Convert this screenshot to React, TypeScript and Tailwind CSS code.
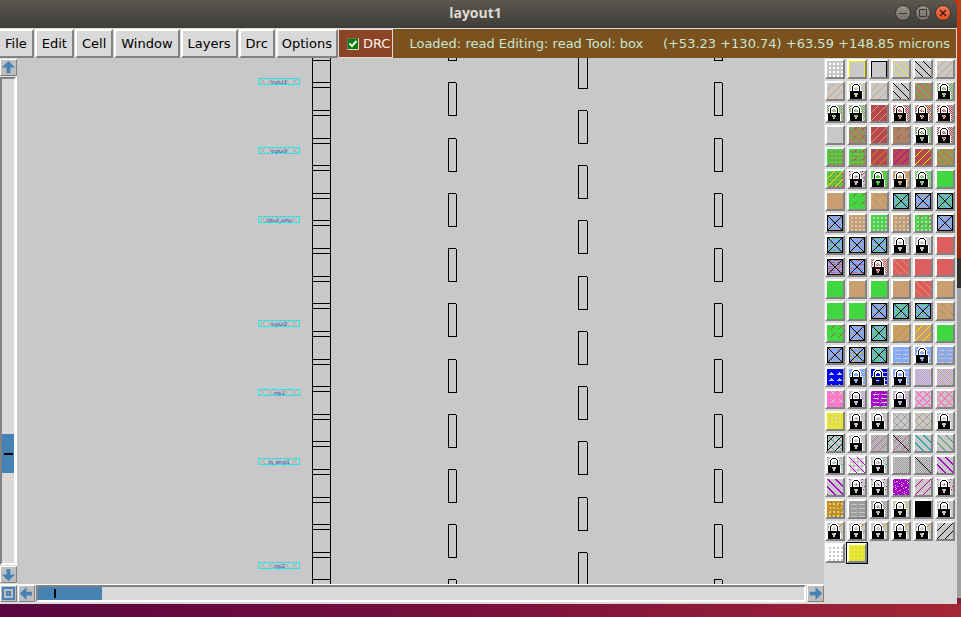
import React, { useState } from "react";

type Test = (x: number, y: number) => boolean;

const SIZE = 16;
const mod = (a: number, b: number) => ((a % b) + b) % b;

const LOCK = [
  "....WWWWWW......",
  "...WWKKKKWW.....",
  "..WWKWWWWKWW....",
  "..WKWWWWWWKW....",
  "..WKWW..WWKW....",
  "..WKW....WKW....",
  "..WKW....WKW....",
  ".WWKWWWWWWKWW...",
  ".KKKKKKKKKKKK...",
  "WKKKKKKKKKKKKW..",
  "WKKKK....KKKKW..",
  "WKKKK....KKKKW..",
  "WKKKKK..KKKKKW..",
  "WKKKKK..KKKKKW..",
  "WKKKKKKKKKKKKW..",
  "WKKKKKKKKKKKKW..",
];

const tests: Record<string, Test> = {
  fill: () => true,
  slash: (x, y) => mod(x + y, 8) === 7,
  back: (x, y) => mod(x - y, 8) === 0,
  backWide: (x, y) => mod(x - y, 8) < 2,
  slashDash: (x, y) => mod(x + y, 8) === 7 && mod(x, 8) > 3,
  backDash: (x, y) => mod(x - y, 8) === 4 && mod(x, 8) > 3,
  cross: (x, y) => mod(x + y, 8) === 7 || mod(x - y, 8) === 0,
  crossWide: (x, y) => mod(x + y, 8) > 5 || mod(x - y, 8) < 2,
  dots: (x, y) => mod(x, 4) > 1 && mod(y, 4) > 1,
  checker: (x, y) => mod(x + y, 2) === 0,
  checkerA: (x, y) => mod(x + y, 4) === 0,
  checkerB: (x, y) => mod(x + y, 4) === 2,
  dash: (x, y) => mod(y, 4) === 1 && mod(x + y, 8) < 6,
  bars: (x, y) => mod(y, 4) === 3 && mod(x + y * 2, 8) < 6,
  specks: (x, y) => (x * 7 + y * 11) % 13 === 0,
  speckle: (x, y) => (x * 5 + y * 3 + ((x * y) % 3)) % 7 === 0,
  tri: (x, y) => mod(y, 6) > 2 && Math.abs(mod(x, 8) - 4) < mod(y, 6) - 2,
  frame: (x, y) => x === 0 || y === 0 || x === 15 || y === 15,
  open: (x, y) => x === 0 || y === 0 || x === 15,
  ex: (x, y) => x === 0 || y === 0 || x === 15 || y === 15 || x === y || x + y === 15,
  diag: (x, y) => x === y,
  lockW: (x, y) => LOCK[y][x] === "W",
  lockK: (x, y) => LOCK[y][x] === "K",
};

function pixels(test: Test) {
  let d = "";
  for (let y = 0; y < SIZE; y++) {
    let x = 0;
    while (x < SIZE) {
      if (!test(x, y)) {
        x++;
        continue;
      }
      const start = x;
      while (x < SIZE && test(x, y)) x++;
      d += `M${start} ${y}h${x - start}v1h${start - x}z`;
    }
  }
  return d;
}

const paths: Record<string, string> = Object.fromEntries(
  Object.entries(tests).map(([name, test]) => [name, pixels(test)]),
);

const colours: Record<string, string> = {
  gray: "#c8c8c8",
  mid: "#9e9e9e",
  white: "#ffffff",
  black: "#000000",
  green: "#41d741",
  tan: "#c99e70",
  sand: "#d0a070",
  red: "#de5d5d",
  maroon: "#b84850",
  brown: "#a98366",
  rust: "#b05040",
  sky: "#82aaff",
  blue: "#0000ff",
  lilac: "#c4a0dc",
  pink: "#ff78cc",
  mauve: "#d084b4",
  purple: "#a800c8",
  magenta: "#c8008c",
  teal: "#28a8a0",
  yellow: "#eeee00",
  gold: "#c89600",
};

const lock = (marks = "") => `fill:gray ${marks} lockW:white lockK:black`;
const boxed = (marks: string) => `fill:sky ${marks} ex:black`;

const greenLock = lock("checkerA:green checkerB:brown");
const maroonLock = lock("checker:maroon");
const tanBox = boxed("dash:tan");
const greenBox = boxed("dash:green bars:green");
const mixedBox = boxed("dash:green specks:tan");
const goldLock = lock("slashDash:gold");

const LAYERS: string[][] = [
  ["fill:gray dots:white", "fill:gray open:yellow", "fill:gray open:black", "fill:gray back:yellow", "fill:gray back:black", "fill:gray slash:sand"],
  ["fill:gray slash:sand", lock("specks:yellow"), "fill:gray slash:sand", "fill:gray back:black", "fill:brown back:green", greenLock],
  [greenLock, greenLock, "fill:maroon slash:sand", maroonLock, lock("checker:maroon specks:yellow"), maroonLock],
  ["fill:gray", "fill:brown back:green slashDash:rust", "fill:maroon slash:sand", "fill:brown slashDash:maroon", greenLock, maroonLock],
  ["fill:green dots:red", "fill:green dots:red slashDash:maroon", "fill:maroon slash:gold", "fill:maroon slash:purple", "fill:maroon slash:yellow", "fill:brown back:green slash:gold"],
  ["fill:green dots:red slash:yellow", lock("checkerA:brown specks:purple"), lock("fill:green specks:red"), lock("fill:tan specks:gray"), lock("checker:green"), "fill:green"],
  ["fill:tan", "fill:green slashDash:rust", "fill:tan backDash:brown", greenBox, tanBox, greenBox],
  [tanBox, "fill:tan dots:gray", "fill:green dots:gray", "fill:tan dots:gray slashDash:brown", "fill:green dots:gray slashDash:rust", tanBox],
  [mixedBox, tanBox, mixedBox, lock(), lock(), "fill:red"],
  [boxed("dash:red bars:red"), boxed("dash:red"), lock("checker:red"), "fill:red back:sand", "fill:red", "fill:red"],
  ["fill:green", "fill:tan", "fill:green", "fill:tan", "fill:red back:sand", "fill:tan"],
  ["fill:green", "fill:green", tanBox, greenBox, mixedBox, "fill:tan backDash:brown"],
  ["fill:green slashDash:rust", tanBox, greenBox, "fill:tan slash:gold", "fill:tan slash:yellow", "fill:green"],
  [tanBox, boxed("dash:tan specks:yellow"), greenBox, "fill:sky bars:gray", lock("fill:sky bars:gray"), "fill:sky bars:gray back:tan"],
  ["fill:blue tri:gray", lock("fill:sky bars:gray"), lock("fill:blue bars:gray"), lock("fill:sky bars:gray"), "fill:gray checker:lilac", "fill:gray checker:lilac back:tan"],
  ["fill:pink slashDash:gray backDash:gray", lock("checker:lilac"), "fill:purple bars:gray specks:mid", lock("checker:lilac"), "fill:gray crossWide:pink", "fill:gray crossWide:pink back:tan"],
  ["fill:yellow dots:gray speckle:gray frame:yellow", lock("specks:pink"), lock("specks:pink"), "fill:gray cross:mid", "fill:gray cross:mid back:tan", lock()],
  ["fill:gray cross:teal open:black slash:black", lock(), "fill:gray cross:mauve checker:mid", "fill:gray slash:mauve checker:mid diag:black", "fill:gray backWide:teal", "fill:gray backWide:teal back:tan"],
  [lock("specks:teal"), "fill:gray frame:white dots:white back:purple", lock("specks:teal"), "fill:gray checker:mid", "fill:gray checker:mid diag:black", "fill:gray backWide:purple"],
  ["fill:gray back:tan backWide:purple", lock("specks:purple"), lock("specks:purple"), "fill:purple speckle:gray", "fill:gray slash:magenta", lock("specks:magenta")],
  ["fill:gold dots:gray specks:maroon", "fill:mid bars:gray", lock("checker:mid"), lock("specks:yellow"), "fill:black", lock()],
  [goldLock, goldLock, goldLock, goldLock, goldLock, "fill:gray slash:black"],
  ["fill:white dots:gray", "fill:yellow dots:gray"],
];

function Swatch({ marks }: { marks: string }) {
  return (
    <svg className="block size-4" viewBox="0 0 16 16" shapeRendering="crispEdges" aria-hidden="true">
      {marks
        .split(" ")
        .filter(Boolean)
        .map((mark, i) => {
          const [shape, colour] = mark.split(":");
          return <path key={i} d={paths[shape]} fill={colours[colour]} />;
        })}
    </svg>
  );
}

function Palette() {
  const [selected, setSelected] = useState(133);
  return (
    <aside className="w-[133px] shrink-0 bg-[#d9d9d9]">
      <div className="grid w-[132px] grid-cols-6">
        {LAYERS.flat().map((marks, i) => (
          <button
            key={i}
            type="button"
            aria-label={`Layer ${i + 1}`}
            aria-pressed={i === selected}
            onClick={() => setSelected(i)}
            className={i === selected ? "border border-black" : "border border-[#d9d9d9]"}
          >
            <span className="block border-2 border-t-white border-r-[#828282] border-b-[#828282] border-l-white">
              <Swatch marks={marks} />
            </span>
          </button>
        ))}
      </div>
    </aside>
  );
}

const RAILS = Array.from({ length: 20 }, (_, k) => Math.round(82.3 + 27.62 * (k - 1)));
const SLOTS = Array.from({ length: 11 }, (_, k) => Math.round(82.3 + 55.24 * (k - 1)));
const MID_SLOTS = Array.from({ length: 10 }, (_, k) => Math.round(110 + 55.24 * (k - 1)));
const PINS: [number, string][] = [
  [78, "input1"],
  [147, "input0"],
  [216, "input_amp"],
  [320, "input2"],
  [389, "mp1"],
  [458, "in_amp1"],
  [562, "mp2"],
];

function Slot({ x, y, w }: { x: number; y: number; w: number }) {
  return <path d={`M${x} ${y + 0.5}h${w - 1}M${x + w - 0.5} ${y + 1}v33M${x} ${y + 33.5}h${w}M${x + 0.5} ${y}v34`} />;
}

function Drawing() {
  return (
    <svg className="absolute inset-0 size-full" role="img" aria-label="Layout view">
      <g transform="translate(-17 -58)" shapeRendering="crispEdges" stroke="#000" fill="none">
        <path d="M312.5 0V2000M330.5 0V2000" />
        {RAILS.map((y) => (
          <path key={y} d={`M312 ${y + 0.5}h18M312 ${y + 5.5}h18`} />
        ))}
        {SLOTS.map((y) => (
          <g key={y}>
            <Slot x={448} y={y} w={9} />
            <Slot x={714} y={y} w={9} />
          </g>
        ))}
        {MID_SLOTS.map((y) => (
          <Slot key={y} x={578} y={y} w={10} />
        ))}
        {PINS.map(([y, name]) => (
          <g key={y}>
            <path
              stroke="#a8a8a8"
              d={[260, 268, 276, 284, 292].map((x) => `M${x} ${y + 1}l5 5M${x + 5} ${y + 1}l-5 5`).join("")}
            />
            <rect x="258.5" y={y + 0.5} width="41" height="6" stroke="#28e6e6" />
            <text x="279" y={y + 6} textAnchor="middle" fill="#1e46b4" stroke="none" fontSize="5" fontFamily="DejaVu Sans, sans-serif">
              {name}
            </text>
          </g>
        ))}
      </g>
    </svg>
  );
}

const ARROWS = {
  up: "M8 1L15 8H10V14H6V8H1Z",
  down: "M8 15L15 8H10V2H6V8H1Z",
  left: "M1 8L8 1V6H14V10H8V15Z",
  right: "M15 8L8 1V6H2V10H8V15Z",
};

function ArrowButton({ to, label }: { to: keyof typeof ARROWS; label: string }) {
  return (
    <button type="button" aria-label={label} className="size-[17px] shrink-0 border border-t-white border-r-[#828282] border-b-[#828282] border-l-white bg-[#bebebe]">
      <svg className="block size-full" viewBox="0 0 16 16" fill="#4682b4" aria-hidden="true">
        <path d={ARROWS[to]} />
      </svg>
    </button>
  );
}

function VerticalBar() {
  return (
    <div className="flex w-[17px] shrink-0 flex-col border-r border-white bg-[#d9d9d9] pt-px pb-px">
      <ArrowButton to="up" label="Scroll up" />
      <div
        role="scrollbar"
        aria-label="Vertical scroll"
        aria-orientation="vertical"
        aria-controls="view"
        aria-valuenow={77}
        className="my-px flex flex-1 flex-col border-2 border-t-[#828282] border-r-white border-b-white border-l-[#828282]"
      >
        <div className="flex-[354]" />
        <div className="flex flex-[38] items-center justify-center bg-[#4682b4]">
          <div className="h-0.5 w-[9px] bg-black" />
        </div>
        <div className="flex-[90]" />
      </div>
      <ArrowButton to="down" label="Scroll down" />
    </div>
  );
}

function HorizontalBar() {
  return (
    <div className="flex h-5 shrink-0 items-start gap-px border-t border-white bg-[#d9d9d9]">
      <button type="button" aria-label="Fit view" className="size-[17px] shrink-0 border border-t-white border-r-[#828282] border-b-[#828282] border-l-white bg-[#bebebe]">
        <svg className="block size-full" viewBox="0 0 15 15" fill="none" stroke="#4682b4" strokeWidth="2" aria-hidden="true">
          <path d="M2 2H13V13H2ZM6 6H9V9H6Z" />
        </svg>
      </button>
      <ArrowButton to="left" label="Scroll left" />
      <div
        role="scrollbar"
        aria-label="Horizontal scroll"
        aria-orientation="horizontal"
        aria-controls="view"
        aria-valuenow={0}
        className="flex h-[17px] flex-1 border-2 border-t-[#828282] border-r-white border-b-white border-l-[#828282]"
      >
        <div className="flex flex-[64] items-center bg-[#4682b4]">
          <div className="ml-4 h-[9px] w-0.5 bg-black" />
        </div>
        <div className="flex-[702]" />
      </div>
      <ArrowButton to="right" label="Scroll right" />
    </div>
  );
}

const MENUS = ["File", "Edit", "Cell", "Window", "Layers", "Drc", "Options"];

function MenuBar() {
  return (
    <div className="flex h-[30px] shrink-0 border-t border-[#d9d9d9] bg-[#7b511d] text-[13px] leading-5">
      <nav className="flex gap-px bg-[#d9d9d9]">
        {MENUS.map((name) => (
          <button
            key={name}
            type="button"
            className="border-2 border-t-white border-r-[#828282] border-b-[#828282] border-l-white px-[5px] text-black first:border-l-0 last:px-1"
          >
            {name}
          </button>
        ))}
      </nav>
      <label className="flex items-center gap-1 border border-[#e8d8d0] bg-[#8c4426] pr-0.5 pl-2 text-[#fff4ec]">
        <span className="grid place-items-center">
          <input
            type="checkbox"
            defaultChecked
            className="col-start-1 row-start-1 size-3 appearance-none border border-t-[#707070] border-r-[#d9d9d9] border-b-[#d9d9d9] border-l-[#707070] bg-[#008000]"
          />
          <svg className="pointer-events-none col-start-1 row-start-1 size-2" viewBox="0 0 8 8" fill="none" stroke="#fff" strokeWidth="2" aria-hidden="true">
            <path d="M0.5 3.5L3 6L7.5 1" />
          </svg>
        </span>
        DRC
      </label>
      <div className="flex flex-1 items-center justify-between border-r border-[#d9d9d9] pr-1.5 pl-4 whitespace-nowrap text-[#c8e6d2]">
        <span>Loaded: read Editing: read Tool: box</span>
        <span>(+53.23 +130.74) +63.59 +148.85 microns</span>
      </div>
    </div>
  );
}

function TitleBar() {
  return (
    <header className="grid h-7 shrink-0 grid-cols-[1fr_auto_1fr] items-center rounded-tr-md bg-linear-to-b from-[#5b5850] to-[#3e3d38] pr-1.5 pb-0.5">
      <h1 className="col-start-2 font-['Open_Sans'] text-[14px] leading-5 font-bold text-[#dfdbd2]">layout1</h1>
      <div className="flex justify-end gap-1">
        <button type="button" aria-label="Minimize" className="size-4 rounded-full border border-[#35342f] bg-linear-to-b from-[#96948b] to-[#716f67]">
          <svg viewBox="0 0 14 14" fill="none" stroke="#3a3935" aria-hidden="true"><path d="M3 7.5H11" /></svg>
        </button>
        <button type="button" aria-label="Maximize" className="size-4 rounded-full border border-[#35342f] bg-linear-to-b from-[#96948b] to-[#716f67]">
          <svg viewBox="0 0 14 14" fill="none" stroke="#3a3935" aria-hidden="true"><path d="M3.5 3.5H10.5V10.5H3.5Z" /></svg>
        </button>
        <button type="button" aria-label="Close" className="size-4 rounded-full border border-[#35342f] bg-linear-to-b from-[#f67a4e] to-[#e2491c]">
          <svg viewBox="0 0 14 14" fill="none" stroke="#3c2014" strokeWidth="1.5" aria-hidden="true"><path d="M4 4L10 10M10 4L4 10" /></svg>
        </button>
      </div>
    </header>
  );
}

export default function App() {
  return (
    <div className="flex h-screen flex-col bg-[#b5380f] font-['DejaVu_Sans',sans-serif]">
      <div className="flex min-h-0 flex-1">
        <main className="flex min-w-0 flex-1 flex-col">
          <TitleBar />
          <MenuBar />
          <div className="flex min-h-0 flex-1">
            <div className="flex min-w-0 flex-1 flex-col">
              <div className="flex min-h-0 flex-1">
                <VerticalBar />
                <div id="view" className="relative min-w-0 flex-1 overflow-hidden bg-[#c8c8c8]">
                  <Drawing />
                </div>
              </div>
              <HorizontalBar />
            </div>
            <Palette />
          </div>
        </main>
        <div className="flex w-1 shrink-0 flex-col">
          <div className="flex-[258] bg-linear-to-b from-[#c23c0e] to-[#96290f]" />
          <div className="flex-[30] bg-[#302f2c]" />
          <div className="flex-[310] bg-[#a0a0a0]" />
          <div className="h-1.5 bg-[#842030]" />
        </div>
      </div>
      <footer className="h-[13px] shrink-0 bg-linear-to-r from-[#5a0440] via-[#7a0f3c] to-[#a52634]" />
    </div>
  );
}
